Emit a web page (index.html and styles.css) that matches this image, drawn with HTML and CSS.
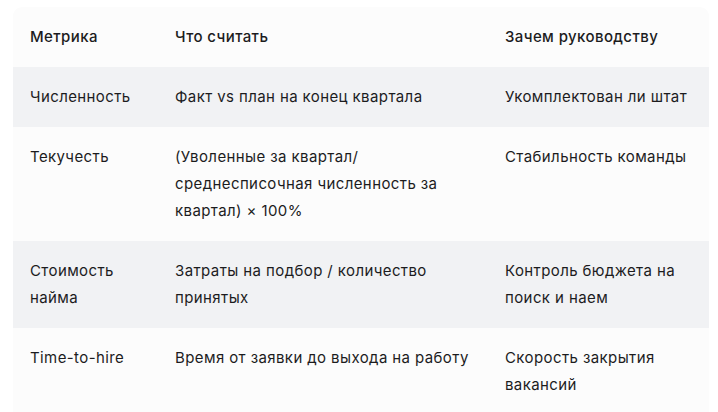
FILE: index.html
```html
<!DOCTYPE html>
<html lang="ru">
<head>
<meta charset="utf-8">
<link rel="stylesheet" href="styles.css">
</head>
<body>
<div class="wrap">
<table class="metrics">
<colgroup><col class="c1"><col class="c2"><col class="c3"></colgroup>
<thead>
<tr><th>Метрика</th><th>Что считать</th><th>Зачем руководству</th></tr>
</thead>
<tbody>
<tr class="alt"><td>Численность</td><td>Факт vs план на конец квартала</td><td>Укомплектован ли штат</td></tr>
<tr><td>Текучесть</td><td>(Уволенные за квартал/ среднесписочная численность за квартал) × 100%</td><td>Стабильность команды</td></tr>
<tr class="alt"><td>Стоимость найма</td><td>Затраты на подбор / количество принятых</td><td>Контроль бюджета на поиск и наем</td></tr>
<tr><td>Time-to-hire</td><td>Время от заявки до выхода на работу</td><td>Скорость закрытия вакансий</td></tr>
</tbody>
</table>
</div>
</body>
</html>
```
FILE: styles.css
```css
html, body {
  margin: 0;
  background: #ffffff;
}
body {
  padding: 7px 9px 0 13px;
  font-family: Inter, "Noto Sans", sans-serif;
  color: #1c1c1e;
}
.wrap {
  width: 696px;
  border-radius: 9px 9px 0 0;
  overflow: hidden;
  background: #fcfcfc;
}
.metrics {
  width: 100%;
  border-collapse: collapse;
  table-layout: fixed;
  font-size: 15px;
  line-height: 27px;
  letter-spacing: 0.4px;
}
.c1 { width: 145px; }
.c2 { width: 330px; }
.c3 { width: 221px; }
.metrics th, .metrics td {
  padding: 16px 17px 17px 17px;
  text-align: left;
  vertical-align: top;
}
.metrics th {
  font-weight: 500;
}
.metrics td {
  font-weight: 400;
}
.alt {
  background: #f1f2f4;
}
```
